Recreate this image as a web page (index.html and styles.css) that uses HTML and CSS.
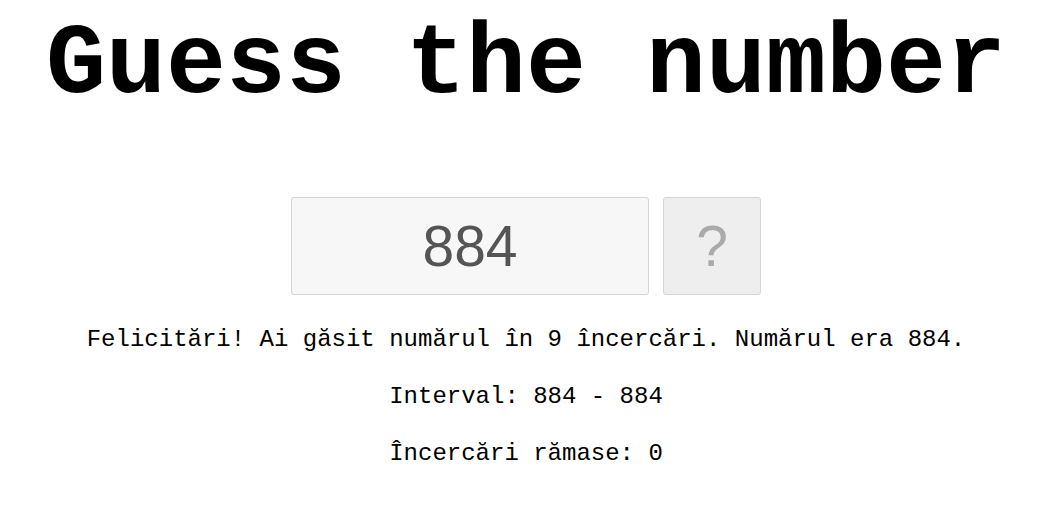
FILE: index.html
```html
<!DOCTYPE html>
<html lang="ro">
<head>
<meta charset="utf-8">
<title>Guess the number</title>
<link rel="stylesheet" href="styles.css">
</head>
<body>
<main class="page">
  <h1 class="title">Guess the number</h1>
  <div class="guess-row">
    <input class="guess-input" type="text" value="884">
    <button class="guess-btn" type="button">?</button>
  </div>
  <p class="msg">Felicitări! Ai găsit numărul în 9 încercări. Numărul era 884.</p>
  <p class="msg">Interval: 884 - 884</p>
  <p class="msg">Încercări rămase: 0</p>
</main>
</body>
</html>
```

FILE: styles.css
```css
html, body {
  margin: 0;
  padding: 0;
  background: #fff;
}
body {
  font-family: "Liberation Mono", "Courier New", monospace;
  color: #000;
}
.page {
  display: flex;
  flex-direction: column;
  align-items: center;
  padding-left: 10px;
  text-align: center;
}
.title {
  margin: 9px 0 0;
  font-size: 100px;
  line-height: 113px;
  font-weight: bold;
  white-space: nowrap;
}
.guess-row {
  display: flex;
  gap: 14px;
  margin-top: 75px;
}
.guess-input {
  box-sizing: border-box;
  width: 358px;
  height: 98px;
  border: 1px solid #d4d4d4;
  border-radius: 3px;
  background: #f7f7f7;
  color: #555;
  font-family: "Liberation Sans", Arial, sans-serif;
  font-size: 57px;
  text-align: center;
  padding: 0;
  outline: none;
}
.guess-btn {
  box-sizing: border-box;
  width: 98px;
  height: 98px;
  border: 1px solid #d4d4d4;
  border-radius: 3px;
  background: #eee;
  color: #aaa;
  font-family: "Liberation Sans", Arial, sans-serif;
  font-size: 57px;
  padding: 0;
}
.msg {
  margin: 0;
  font-size: 24px;
  line-height: 27px;
  color: #000;
}
.msg:first-of-type {
  margin-top: 31px;
}
.msg + .msg {
  margin-top: 30px;
}
```
